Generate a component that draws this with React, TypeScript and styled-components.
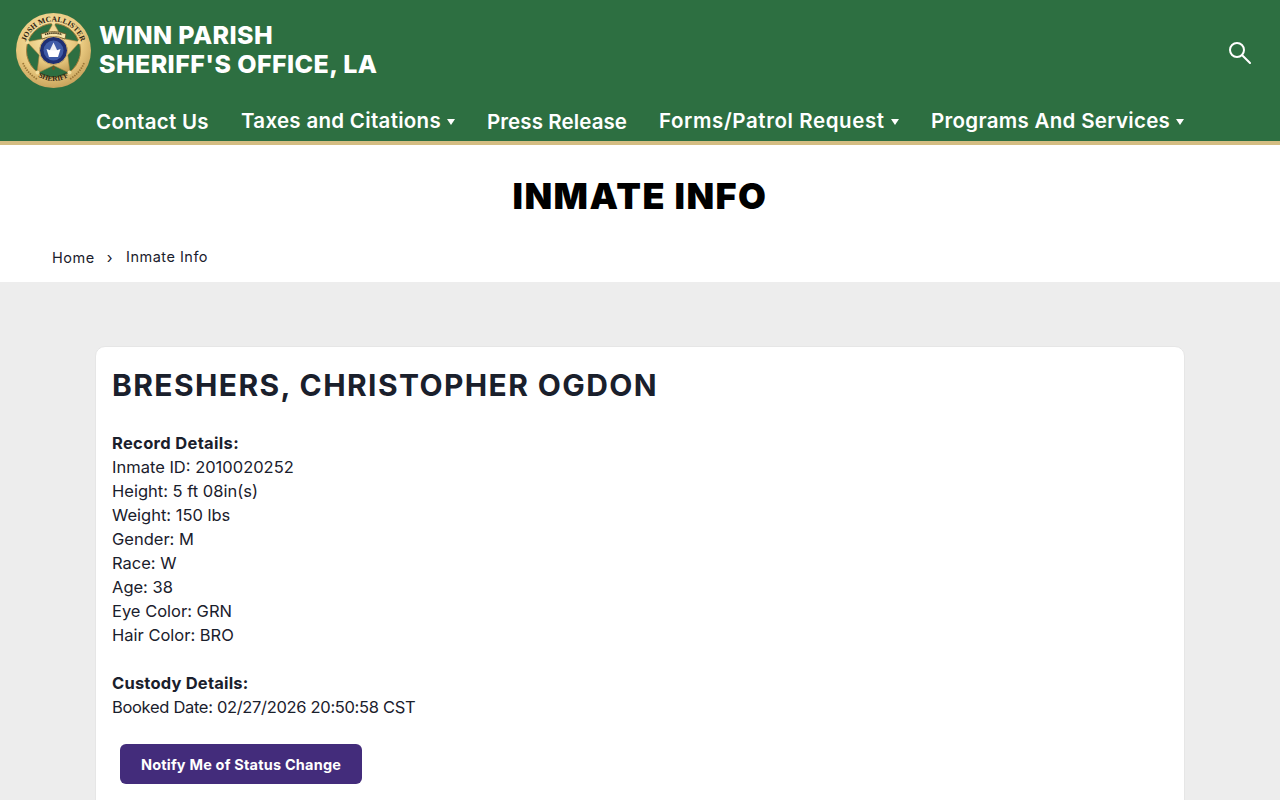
import React from "react";
import styled, { createGlobalStyle } from "styled-components";

const Global = createGlobalStyle`
  html, body { margin: 0; padding: 0; height: 100%; overflow: hidden; background: #ededed; }
  body { font-family: Inter, "Liberation Sans", sans-serif; color: #1a202c; }
  * { box-sizing: border-box; }
`;

const Page = styled.div`height: 800px; overflow: hidden; display: flex; flex-direction: column;`;
const Header = styled.header`
  height: 145px; flex: none; background: #2d6f41; border-bottom: 4px solid #d4bd82;
  display: flex; flex-direction: column; color: #fff;
`;
const TopRow = styled.div`
  height: 106px; flex: none; padding: 13px 29px 0 16px; display: flex; align-items: flex-start; justify-content: space-between;
`;
const Brand = styled.div`display: flex; align-items: center; gap: 8px; height: 75px;`;
const BrandName = styled.div`
  font-size: 25px; line-height: 29px; font-weight: 800; letter-spacing: 0.4px; margin-top: -1px; white-space: nowrap;
`;
const SearchButton = styled.div`width: 24px; height: 24px; margin-top: 27px; color: #fff;`;
const Nav = styled.nav`display: flex; align-items: center; gap: 32px; padding-left: 96px; height: 24px; margin-top: 3px;`;
const NavItem = styled.span<{ $w: number; $sub?: boolean; $ls: number }>`
  display: flex; align-items: center; gap: 6px; width: ${p => p.$w}px; white-space: nowrap;
  font-size: 20.5px; font-weight: 600; line-height: 24px; letter-spacing: ${p => p.$ls}px;
  margin-top: ${p => (p.$sub ? -1 : 1)}px;
`;
const Caret = styled.span`
  width: 0; height: 0; border-left: 4px solid transparent; border-right: 4px solid transparent;
  border-top: 6px solid #fff; margin-top: 2px; flex: none;
`;
const TitleBand = styled.section`height: 137px; flex: none; background: #fff; display: flex; flex-direction: column;`;
const PageTitle = styled.h1`
  margin: 31px 0 0; text-align: center; font-size: 36px; line-height: 40px; font-weight: 900; color: #000; letter-spacing: 1.45px;
`;
const Crumbs = styled.div`
  display: flex; align-items: center; margin-top: 29px; padding-left: 52px; font-size: 14.5px; line-height: 24px; color: #1a202c; letter-spacing: 0.5px;
`;
const CrumbHome = styled.span`width: 44px; margin-top: 1px; white-space: nowrap;`;
const CrumbSep = styled.span`width: 29px; padding-right: 1px; text-align: center; font-size: 15px; margin-top: 1px;`;
const CrumbNow = styled.span`white-space: nowrap; margin: -1px 0 0 1px;`;
const Main = styled.main`flex: 1; padding: 64px 95px 0;`;
const Card = styled.article`
  background: #fff; border: 1px solid #e6e6e6; border-radius: 10px; padding: 19px 16px 40px; height: 600px;
`;
const Name = styled.h2`margin: 0 0 27px; font-size: 30px; line-height: 38px; font-weight: 700; color: #1a202c; letter-spacing: 1.4px;`;
const Block = styled.div`margin-bottom: 24px; font-size: 16.5px; line-height: 24px; color: #1a202c;`;
const Label = styled.div<{ $ls: number }>`font-weight: 700; letter-spacing: ${p => p.$ls}px;`;
const Row = styled.div<{ $ls?: number }>`font-weight: 400; letter-spacing: ${p => p.$ls ?? 0}px;`;
const Notify = styled.button`
  display: block; margin: 25px 0 0 8px; width: 242px; height: 40px; border: 0; border-radius: 6px; background: #432c7b; color: #fff;
  font-family: inherit; font-size: 14.5px; font-weight: 700; letter-spacing: 0.2px;
`;

const Logo = () => (
  <svg width="75" height="75" viewBox="0 0 75 75" aria-label="Sheriff badge">
    <defs>
      <radialGradient id="g" cx="45%" cy="35%" r="75%">
        <stop offset="0%" stopColor="#fbe9b0" />
        <stop offset="60%" stopColor="#e8c87e" />
        <stop offset="100%" stopColor="#b9924c" />
      </radialGradient>
      <path id="top" d="M10.25 27.6 A29 29 0 0 1 64.75 27.6" />
      <path id="bot" d="M21 63 Q37.5 73 54 63" />
    </defs>
    <circle cx="37.5" cy="37.5" r="37.5" fill="url(#g)" />
    <circle cx="37.5" cy="37.5" r="27" fill="#2d6f41" stroke="#a67f3d" strokeWidth="1" />
    <polygon
      points="37.5,9.5 46.3,25.4 64.1,28.85 51.8,42.1 54,60.15 37.5,52.5 21,60.15 23.2,42.1 10.9,28.85 28.7,25.4"
      fill="url(#g)" stroke="#a67f3d" strokeWidth=".6"
    />
    <circle cx="37.5" cy="10" r="2" fill="#f3dc9c" />
    <circle cx="63.5" cy="29" r="2" fill="#f3dc9c" />
    <circle cx="11.5" cy="29" r="2" fill="#f3dc9c" />
    <circle cx="53.5" cy="59.5" r="2" fill="#f3dc9c" />
    <circle cx="21.5" cy="59.5" r="2" fill="#f3dc9c" />
    <path d="M25 21 Q37.5 16 50 21 L49 26 Q37.5 21 26 26 Z" fill="#f6e3a8" stroke="#6e5424" strokeWidth=".8" />
    <path d="M29 21.5 Q37.5 18.7 46 21.5" fill="none" stroke="#3d2e14" strokeWidth="1.6" strokeDasharray="1.4 .7" />
    <circle cx="37.5" cy="37.5" r="14" fill="#1f2f73" stroke="#d8b464" strokeWidth="1" />
    <circle cx="37.5" cy="37.5" r="10" fill="#3f5ba6" />
    <path d="M37.5 29.5 L42 39 L33 39 Z" fill="#eef0f4" />
    <path d="M30.5 36 Q37.5 39 44.5 36 L42 44 L33 44 Z" fill="#fff" />
    <path d="M37.5 52.5 l1.8 3 -1.8 2 -1.8 -2 Z" fill="#6e5424" />
    <path d="M7 50 Q11 60 21 66" fill="none" stroke="#9a7637" strokeWidth="1.8" strokeDasharray="1.5 1" />
    <path d="M68 50 Q64 60 54 66" fill="none" stroke="#9a7637" strokeWidth="1.8" strokeDasharray="1.5 1" />
    <text fontFamily="'Liberation Serif', serif" fontWeight="700" fontSize="7.6" fill="#2f2412">
      <textPath href="#top" startOffset="50%" textAnchor="middle">JOSH MCALLISTER</textPath>
    </text>
    <text fontFamily="'Liberation Serif', serif" fontWeight="700" fontSize="7.5" fill="#2f2412">
      <textPath href="#bot" startOffset="50%" textAnchor="middle">SHERIFF</textPath>
    </text>
  </svg>
);

export default function App() {
  return (
    <Page>
      <Global />
      <Header>
        <TopRow>
          <Brand>
            <Logo />
            <BrandName>WINN PARISH<br />SHERIFF'S OFFICE, LA</BrandName>
          </Brand>
          <SearchButton>
            <svg width="24" height="24" viewBox="0 0 24 24" fill="none" stroke="currentColor" strokeWidth="2" strokeLinecap="round">
              <circle cx="10" cy="10" r="7" />
              <path d="M15.2 15.2 L23 23" />
            </svg>
          </SearchButton>
        </TopRow>
        <Nav>
          <NavItem $w={113} $ls={0.3}>Contact Us</NavItem>
          <NavItem $w={214} $ls={0.3} $sub>Taxes and Citations<Caret /></NavItem>
          <NavItem $w={140} $ls={0.1}>Press Release</NavItem>
          <NavItem $w={240} $ls={0.6} $sub>Forms/Patrol Request<Caret /></NavItem>
          <NavItem $w={253} $ls={0.3} $sub>Programs And Services<Caret /></NavItem>
        </Nav>
      </Header>
      <TitleBand>
        <PageTitle>INMATE INFO</PageTitle>
        <Crumbs>
          <CrumbHome>Home</CrumbHome>
          <CrumbSep>›</CrumbSep>
          <CrumbNow>Inmate Info</CrumbNow>
        </Crumbs>
      </TitleBand>
      <Main>
        <Card>
          <Name>BRESHERS, CHRISTOPHER OGDON</Name>
          <Block>
            <Label $ls={0.33}>Record Details:</Label>
            <Row>Inmate ID: 2010020252</Row>
            <Row>Height: 5 ft 08in(s)</Row>
            <Row>Weight: 150 lbs</Row>
            <Row>Gender: M</Row>
            <Row>Race: W</Row>
            <Row>Age: 38</Row>
            <Row>Eye Color: GRN</Row>
            <Row>Hair Color: BRO</Row>
          </Block>
          <Block>
            <Label $ls={0.2}>Custody Details:</Label>
            <Row $ls={-0.32}>Booked Date: 02/27/2026 20:50:58 CST</Row>
          </Block>
          <Notify>Notify Me of Status Change</Notify>
        </Card>
      </Main>
    </Page>
  );
}
